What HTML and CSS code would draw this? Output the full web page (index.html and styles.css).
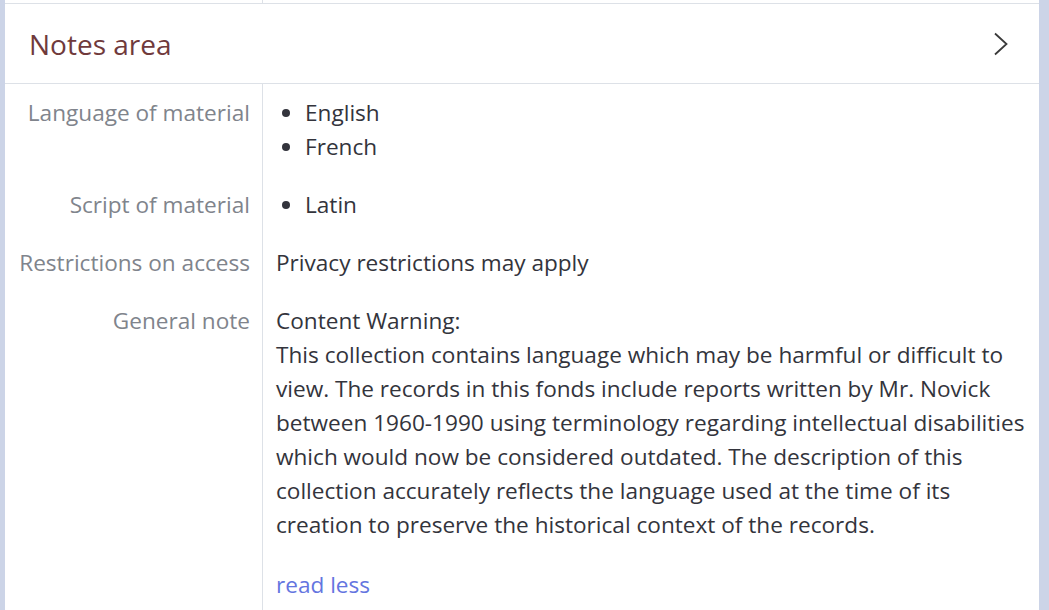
FILE: index.html
```html
<!DOCTYPE html>
<html lang="en">
<head>
<meta charset="utf-8">
<title>Notes area</title>
<link rel="stylesheet" href="styles.css">
</head>
<body>
<div class="frame">
  <div class="panel">
    <div class="stub">
      <div class="stub-label"></div>
      <div class="stub-value"></div>
    </div>
    <div class="section-head">
      <h2 class="section-title">Notes area</h2>
      <svg class="chevron" width="16" height="24" viewBox="0 0 16 24" aria-hidden="true">
        <path d="M2 1.5 L13.5 12 L2 22.5" fill="none" stroke="#3a3a3a" stroke-width="1.8"/>
      </svg>
    </div>
    <div class="fields">
      <div class="field">
        <div class="label">Language of material</div>
        <div class="value">
          <ul class="list">
            <li>English</li>
            <li>French</li>
          </ul>
        </div>
      </div>
      <div class="field">
        <div class="label">Script of material</div>
        <div class="value">
          <ul class="list">
            <li>Latin</li>
          </ul>
        </div>
      </div>
      <div class="field">
        <div class="label">Restrictions on access</div>
        <div class="value"><p class="para">Privacy restrictions may apply</p></div>
      </div>
      <div class="field">
        <div class="label">General note</div>
        <div class="value">
          <p class="para note">Content Warning:<br>This collection contains language which may be harmful or difficult to view. The records in this fonds include reports written by Mr. Novick between 1960-1990 using terminology regarding intellectual disabilities which would now be considered outdated. The description of this collection accurately reflects the language used at the time of its creation to preserve the historical context of the records.</p>
          <a class="more" href="#">read less</a>
        </div>
      </div>
    </div>
  </div>
</div>
</body>
</html>
```

FILE: styles.css
```css
html, body {
  margin: 0;
  padding: 0;
  background: #ffffff;
}

body {
  font-family: "Open Sans", "Noto Sans", "Liberation Sans", sans-serif;
  font-size: 22.6px;
  line-height: 34px;
  color: #33343c;
  overflow: hidden;
}

.frame {
  height: 610px;
  border-left: 5px solid #ccd4e7;
  border-right: 10px solid #ccd4e7;
  box-sizing: border-box;
}

.panel {
  background: #ffffff;
}

.stub {
  display: grid;
  grid-template-columns: 257px 1fr;
  height: 3px;
}

.stub-value {
  border-left: 1px solid #dde1e7;
}

.section-head {
  display: flex;
  align-items: center;
  justify-content: space-between;
  height: 79px;
  border-top: 1px solid #dde1e7;
  border-bottom: 1px solid #dde1e7;
  padding: 0 30px 0 24px;
}

.section-title {
  margin: 0;
  font-size: 28px;
  font-weight: 400;
  color: #703a3c;
  line-height: 34px;
}

.chevron {
  display: block;
  margin-top: 1px;
}

.fields {
  display: flex;
  flex-direction: column;
}

.field {
  display: grid;
  grid-template-columns: 257px 1fr;
}

.label {
  text-align: right;
  padding: 12px 12px 12px 0;
  color: #80848c;
  white-space: nowrap;
}

.value {
  border-left: 1px solid #dde1e7;
  padding: 12px 8px 12px 13px;
}

.list {
  margin: 0;
  padding: 0 0 0 29px;
}

.para {
  margin: 0;
}

.note {
  margin-bottom: 26px;
}

.more {
  color: #6475e0;
  text-decoration: none;
}
```
